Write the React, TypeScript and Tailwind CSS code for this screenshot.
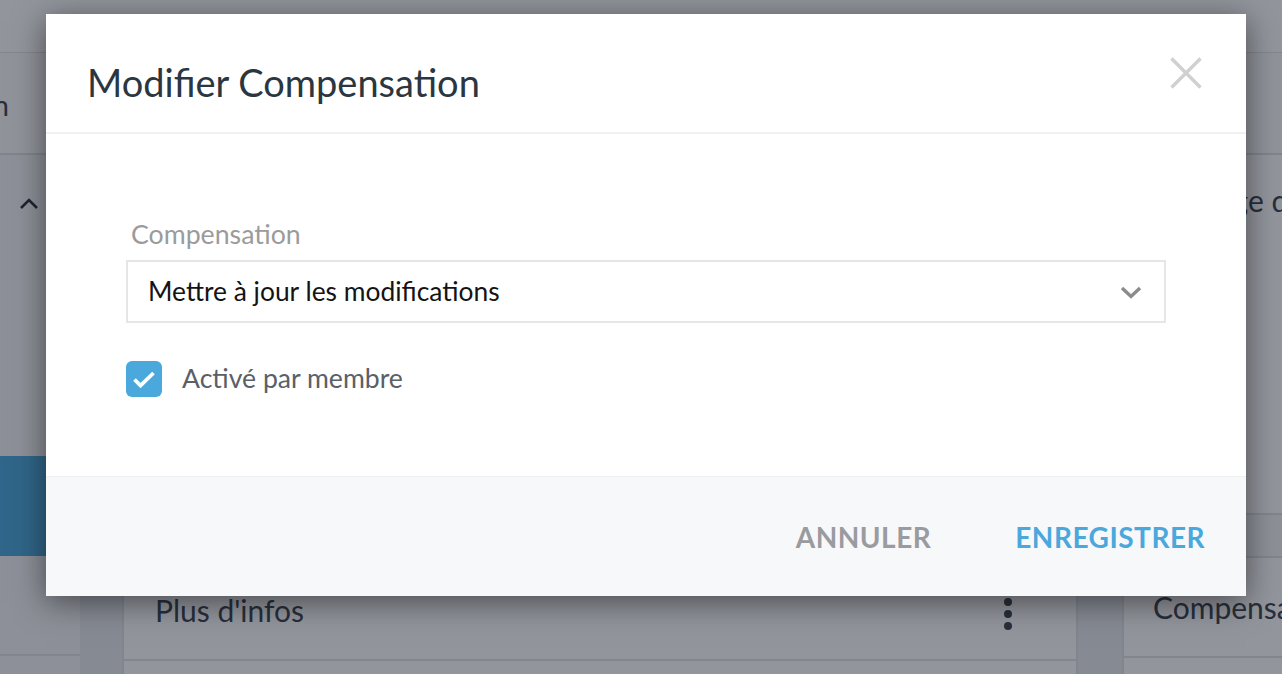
export default function App() {
  return (
    <div className="relative h-[674px] w-[1282px] overflow-hidden bg-[#e9ebee] font-['Lato',sans-serif]">
      {/* underlying page */}
      <div className="flex h-full flex-col">
        <div className="h-[53px] shrink-0 border-b border-[#e1e4e8] bg-white" />
        <div className="flex h-[102px] shrink-0 items-center border-b-2 border-[#dcdfe3] bg-[#fbfbfc]">
          <div className="flex w-[9px] justify-end overflow-hidden whitespace-nowrap pt-[4px] text-[28px] text-[#3b444d]">
            Compensation
          </div>
        </div>
        <div className="flex flex-1">
          <aside className="flex w-[80px] shrink-0 flex-col bg-[#f5f6f8]">
            <div className="flex h-[100px] items-start pl-[19px] pt-[41px]">
              <svg width="20" height="14" viewBox="0 0 20 14" fill="none">
                <path d="M2 12 L10 4 L18 12" stroke="#2a3139" strokeWidth="2.6" />
              </svg>
            </div>
            <div className="h-[201px]" />
            <div className="h-[100px] bg-[#4aa8dc]" />
            <div className="h-[100px] border-b-2 border-[#dfe2e6]" />
          </aside>
          <div className="w-[42px] shrink-0" />
          <section className="flex w-[956px] shrink-0 flex-col border-l-2 border-r-2 border-[#dfe2e6] bg-white">
            <div className="h-[418px]" />
            <div className="flex h-[88px] items-center justify-between border-b-2 border-[#dfe2e6] pb-[12px] pl-[31px] pr-[64px]">
              <span className="text-[30px] text-[#3b444d]">Plus d'infos</span>
              <div className="flex flex-col gap-[4px] pt-[8px]">
                <span className="h-[8px] w-[8px] rounded-full bg-[#3b444d]" />
                <span className="h-[8px] w-[8px] rounded-full bg-[#3b444d]" />
                <span className="h-[8px] w-[8px] rounded-full bg-[#3b444d]" />
              </div>
            </div>
          </section>
          <div className="w-[44px] shrink-0" />
          <section className="flex flex-1 flex-col border-l-2 border-[#dfe2e6] bg-white">
            <div className="flex h-[90px] items-center whitespace-nowrap pl-[22px] text-[30px] text-[#3b444d]">
              Montage des frais
            </div>
            <div className="h-[270px] border-b-2 border-[#dfe2e6]" />
            <div className="h-[43px] border-b-2 border-[#dfe2e6] bg-[#f5f6f8]" />
            <div className="flex h-[100px] items-center whitespace-nowrap border-b-2 border-[#dfe2e6] pl-[29px] text-[30px] text-[#3b444d]">
              Compensation
            </div>
          </section>
        </div>
      </div>

      {/* overlay */}
      <div className="absolute inset-0 bg-[rgba(17,24,39,0.46)]" />

      {/* modal */}
      <div className="absolute left-[46px] top-[14px] flex w-[1200px] flex-col bg-white shadow-[0_6px_30px_rgba(0,0,0,0.5)]">
        <div className="flex h-[120px] items-start justify-between border-b-2 border-[#f0f1f3] pl-[41px] pr-[44px]">
          <h1 className="pt-[45px] text-[38px] leading-[46px] text-[#2b3640]">Modifier Compensation</h1>
          <button className="mt-[43px] p-0">
            <svg width="32" height="32" viewBox="0 0 32 32" fill="none">
              <path d="M1.5 1.5 L30.5 30.5 M30.5 1.5 L1.5 30.5" stroke="#d0d0d0" strokeWidth="3.4" />
            </svg>
          </button>
        </div>
        <div className="flex h-[342px] flex-col px-[80px] pt-[80px]">
          <label className="pl-[5px] text-[26.7px] leading-[40px] text-[#9b9b9b]">Compensation</label>
          <div className="mt-[6px] flex h-[63px] items-center justify-between border-2 border-[#e6e6e6] pl-[20px] pr-[22px]">
            <span className="text-[26.4px] text-[#141414]">Mettre à jour les modifications</span>
            <svg width="22" height="14" viewBox="0 0 22 14" fill="none">
              <path d="M2 3 L11 11.5 L20 3" stroke="#8c8c8c" strokeWidth="3.4" />
            </svg>
          </div>
          <div className="mt-[36px] flex items-center gap-[20px]">
            <span className="flex h-[36px] w-[36px] items-center justify-center rounded-[6px] bg-[#4aa8dc]">
              <svg width="36" height="36" viewBox="0 0 36 36" fill="none">
                <path d="M8.5 18.5 L14.5 24.5 L27.5 12" stroke="white" strokeWidth="3.8" />
              </svg>
            </span>
            <span className="text-[26.6px] text-[#5a6068]">Activé par membre</span>
          </div>
        </div>
        <div className="flex h-[120px] items-center justify-end gap-[84px] border-t border-[#eef0f2] bg-[#f7f8fa] pr-[41px]">
          <button className="text-[28px] font-bold tracking-[0.5px] text-[#9a9b9f]">ANNULER</button>
          <button className="text-[28px] font-bold tracking-[0.5px] text-[#4aa8dc]">ENREGISTRER</button>
        </div>
      </div>
    </div>
  );
}
